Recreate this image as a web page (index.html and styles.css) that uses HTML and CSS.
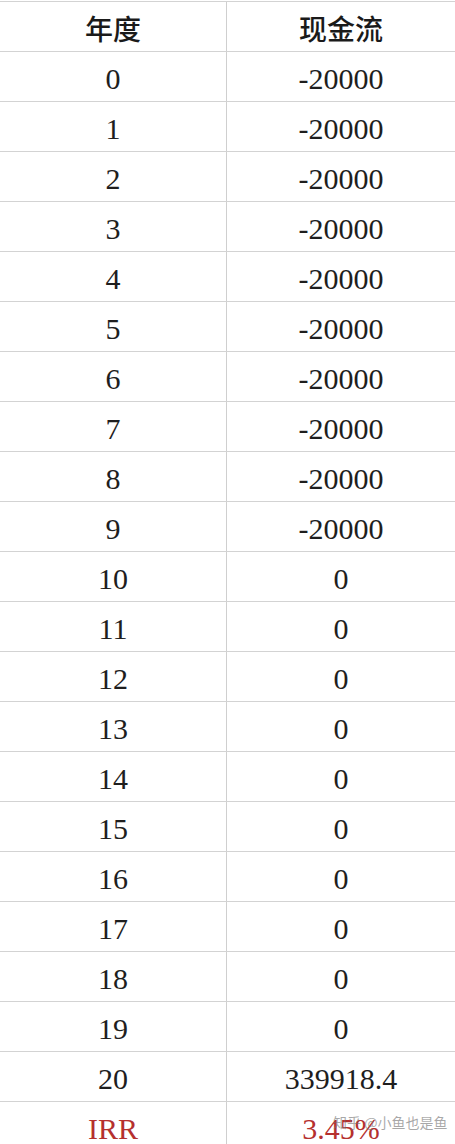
FILE: index.html
```html
<!DOCTYPE html>
<html lang="zh">
<head>
<meta charset="utf-8">
<link rel="stylesheet" href="styles.css">
</head>
<body>
<div class="sheet">
  <div class="row head"><div class="cell">年度</div><div class="cell">现金流</div></div>
  <div class="row"><div class="cell">0</div><div class="cell">-20000</div></div>
  <div class="row"><div class="cell">1</div><div class="cell">-20000</div></div>
  <div class="row"><div class="cell">2</div><div class="cell">-20000</div></div>
  <div class="row"><div class="cell">3</div><div class="cell">-20000</div></div>
  <div class="row"><div class="cell">4</div><div class="cell">-20000</div></div>
  <div class="row"><div class="cell">5</div><div class="cell">-20000</div></div>
  <div class="row"><div class="cell">6</div><div class="cell">-20000</div></div>
  <div class="row"><div class="cell">7</div><div class="cell">-20000</div></div>
  <div class="row"><div class="cell">8</div><div class="cell">-20000</div></div>
  <div class="row"><div class="cell">9</div><div class="cell">-20000</div></div>
  <div class="row"><div class="cell">10</div><div class="cell">0</div></div>
  <div class="row"><div class="cell">11</div><div class="cell">0</div></div>
  <div class="row"><div class="cell">12</div><div class="cell">0</div></div>
  <div class="row"><div class="cell">13</div><div class="cell">0</div></div>
  <div class="row"><div class="cell">14</div><div class="cell">0</div></div>
  <div class="row"><div class="cell">15</div><div class="cell">0</div></div>
  <div class="row"><div class="cell">16</div><div class="cell">0</div></div>
  <div class="row"><div class="cell">17</div><div class="cell">0</div></div>
  <div class="row"><div class="cell">18</div><div class="cell">0</div></div>
  <div class="row"><div class="cell">19</div><div class="cell">0</div></div>
  <div class="row"><div class="cell">20</div><div class="cell">339918.4</div></div>
  <div class="row irr"><div class="cell">IRR</div><div class="cell">3.45%</div></div>
  <div class="watermark">知乎 @小鱼也是鱼</div>
</div>
</body>
</html>
```

FILE: styles.css
```css
html, body {
  margin: 0;
  padding: 0;
  background: #ffffff;
}
body {
  width: 455px;
  height: 1144px;
  overflow: hidden;
}
.sheet {
  position: relative;
  padding-top: 1px;
  font-family: "Liberation Serif", "Noto Sans CJK SC", serif;
  color: #1e1e1e;
}
.row {
  display: grid;
  grid-template-columns: 226px 1fr;
  border-top: 1px solid #d3d3d3;
  height: 49px;
}
.cell {
  display: flex;
  align-items: center;
  justify-content: center;
  font-size: 30px;
  line-height: 49px;
  padding-top: 4px;
  box-sizing: border-box;
  height: 49px;
}
.cell + .cell {
  border-left: 1px solid #cfcfcf;
}
.head .cell {
  font-family: "Noto Sans CJK SC", sans-serif;
  font-weight: 500;
  font-size: 28px;
  padding-top: 4px;
  color: #1a1a1a;
}
.irr .cell {
  color: #b5302e;
}
.watermark {
  position: absolute;
  left: 333px;
  top: 1112px;
  font-family: "Noto Sans CJK SC", sans-serif;
  font-size: 14px;
  line-height: 20px;
  color: rgba(110, 110, 110, 0.6);
  white-space: nowrap;
}
```
